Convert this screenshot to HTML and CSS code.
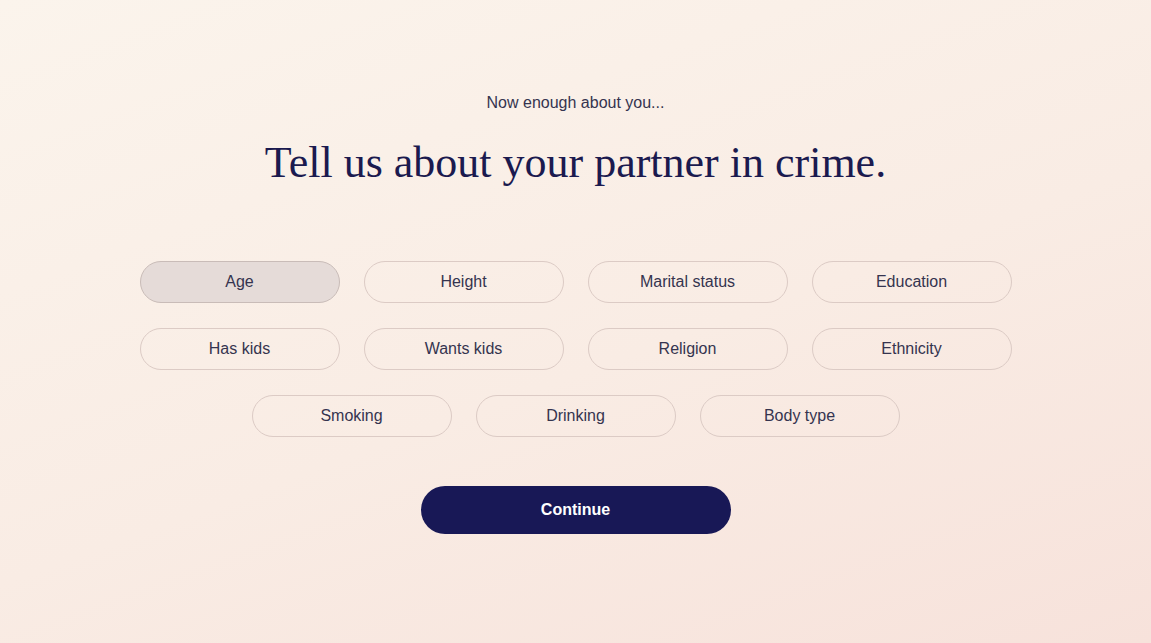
FILE: index.html
```html
<!DOCTYPE html>
<html lang="en">
<head>
    <meta charset="UTF-8" />
    <meta name="viewport" content="width=device-width, initial-scale=1" />
    <title>Partner preferences</title>
    <link rel="stylesheet" href="styles.css">
</head>
<body>

<main class="step">
    <p class="eyebrow">Now enough about you...</p>
    <h1 class="title">Tell us about your partner in crime.</h1>

    <div class="options">
        <button class="pill selected">Age</button>
        <button class="pill">Height</button>
        <button class="pill">Marital status</button>
        <button class="pill">Education</button>
        <button class="pill">Has kids</button>
        <button class="pill">Wants kids</button>
        <button class="pill">Religion</button>
        <button class="pill">Ethnicity</button>
        <button class="pill">Smoking</button>
        <button class="pill">Drinking</button>
        <button class="pill">Body type</button>
    </div>

    <button class="continue">Continue</button>
</main>

</body>
</html>
```

FILE: styles.css
```css
html, body {
  height: 100%;
}
body {
  margin: 0;
  background: linear-gradient(160deg, #fbf4ec 0%, #f9ece4 55%, #f7e2db 100%);
  color: #1b1a4f;
  font-family: Arial, 'Liberation Sans', sans-serif;
}
.step {
  display: flex;
  flex-direction: column;
  align-items: center;
  padding-top: 93px;
}
.eyebrow {
  margin: 0;
  font-size: 16px;
  line-height: 20px;
  color: #35344f;
}
.title {
  margin: 24px 0 0;
  font-family: 'Liberation Serif', 'Times New Roman', serif;
  font-weight: 400;
  font-size: 44px;
  line-height: 52px;
  color: #1b1a4f;
}
.options {
  display: flex;
  flex-wrap: wrap;
  justify-content: center;
  gap: 25px 24px;
  width: 872px;
  margin-top: 72px;
}
.pill {
  width: 200px;
  height: 42px;
  border: 1px solid #dccbc5;
  border-radius: 21px;
  background: transparent;
  color: #35344f;
  font-family: inherit;
  font-size: 16px;
  cursor: pointer;
}
.pill.selected {
  background: #e5dbd8;
  border-color: #c9bcb8;
}
.continue {
  margin-top: 49px;
  width: 310px;
  height: 48px;
  border: none;
  border-radius: 24px;
  background: #181856;
  color: #ffffff;
  font-family: inherit;
  font-weight: 700;
  font-size: 16px;
  cursor: pointer;
}
```
